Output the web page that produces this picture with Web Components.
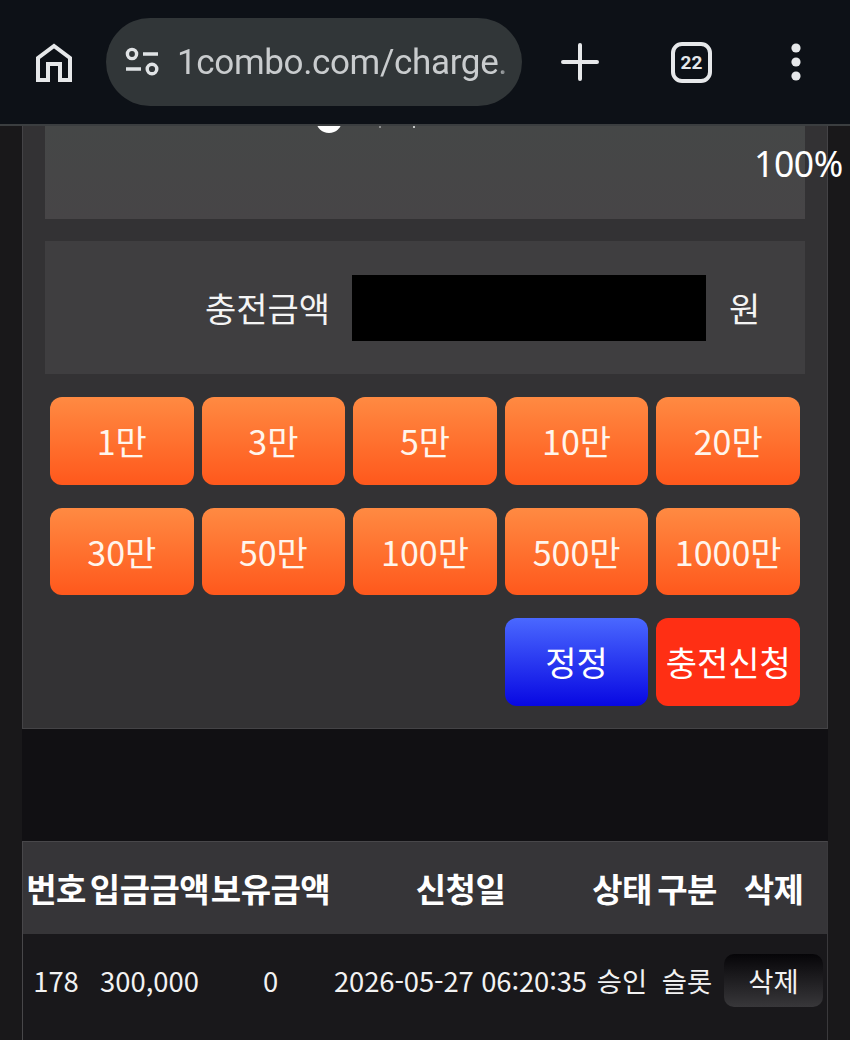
<!DOCTYPE html>
<html lang="ko">
<head>
<meta charset="utf-8">
<title>1combo charge</title>
<style>
    html, body { margin: 0; height: 100%; overflow: hidden; background: #19181a; }
    body { font-family: "Noto Sans CJK KR", "Noto Sans", sans-serif; color: #fff; }
</style>
</head>
<body>
<browser-bar url="1combo.com/charge." tabs="22"></browser-bar>
<page-wrap>
    <charge-panel>
        <progress-box value="100%"></progress-box>
        <amount-row label="충전금액" unit="원"></amount-row>
        <button-grid>
            <money-button>1만</money-button>
            <money-button>3만</money-button>
            <money-button>5만</money-button>
            <money-button>10만</money-button>
            <money-button>20만</money-button>
            <money-button>30만</money-button>
            <money-button>50만</money-button>
            <money-button>100만</money-button>
            <money-button>500만</money-button>
            <money-button>1000만</money-button>
            <money-button kind="blue" style="grid-column: 4">정정</money-button>
            <money-button kind="red" style="grid-column: 5">충전신청</money-button>
        </button-grid>
    </charge-panel>
    <history-table></history-table>
</page-wrap>

<script>
const barTemplate = document.createElement('template');
barTemplate.innerHTML = `
    <style>
        :host {
            display: flex;
            align-items: center;
            height: 124px;
            background: #0d1117;
            border-bottom: 2px solid #3b3e40;
            color: #e6e8ea;
            position: relative;
            z-index: 2;
        }
        svg { display: block; flex: none; }
        .home { margin-left: 34px; margin-top: 1px; }
        .pill {
            display: flex;
            align-items: center;
            box-sizing: border-box;
            width: 416px;
            height: 88px;
            margin-left: 32px;
            padding: 0 0 0 19px;
            border-radius: 44px;
            background: #313638;
        }
        .url {
            margin-left: 16px;
            white-space: nowrap;
            font: 400 35px Roboto, sans-serif;
            letter-spacing: -0.35px;
            color: #c9ccce;
            -webkit-mask-image: linear-gradient(90deg, #000 97%, rgba(0,0,0,0.35) 100%);
        }
        .plus { margin-left: 38px; }
        .tabs {
            display: flex;
            align-items: center;
            justify-content: center;
            box-sizing: border-box;
            width: 41px;
            height: 41px;
            margin-left: 71px;
            border: 4px solid #e6e8ea;
            border-radius: 11px;
            font: 700 19px Roboto, sans-serif;
        }
        .more { margin-left: 78px; }
    </style>
    <svg class="home" width="40" height="42" viewBox="0 0 40 42" fill="none" stroke="#e6e8ea" stroke-width="4">
        <path d="M4 38V16L20 4l16 12v22H26V22H14v16z"/>
    </svg>
    <div class="pill">
        <svg width="36" height="30" viewBox="0 0 36 30" fill="none" stroke="#e0e3e5" stroke-width="3.4">
            <circle cx="7" cy="7" r="4.6"/>
            <path d="M18 7h15M1 22h15"/>
            <circle cx="27" cy="22" r="4.8"/>
        </svg>
        <span class="url"></span>
    </div>
    <svg class="plus" width="40" height="40" viewBox="0 0 40 40" stroke="#e6e8ea" stroke-width="4" stroke-linecap="round">
        <path d="M20 3v34M3 20h34"/>
    </svg>
    <div class="tabs"></div>
    <svg class="more" width="12" height="38" viewBox="0 0 12 38" fill="#e6e8ea">
        <circle cx="6" cy="5" r="4.6"/><circle cx="6" cy="19" r="4.6"/><circle cx="6" cy="33" r="4.6"/>
    </svg>
`;

class BrowserBar extends HTMLElement {
    constructor() {
        super();
        this.attachShadow({mode: 'open'}).appendChild(barTemplate.content.cloneNode(true));
    }

    connectedCallback() {
        this.shadowRoot.querySelector('.url').textContent = this.getAttribute('url');
        this.shadowRoot.querySelector('.tabs').textContent = this.getAttribute('tabs');
    }
}
customElements.define('browser-bar', BrowserBar);

const wrapTemplate = document.createElement('template');
wrapTemplate.innerHTML = `
    <style>
        :host {
            display: block;
            box-sizing: border-box;
            width: 806px;
            margin-left: 22px;
            background: #111013;
        }
    </style>
    <slot></slot>
`;

class PageWrap extends HTMLElement {
    constructor() {
        super();
        this.attachShadow({mode: 'open'}).appendChild(wrapTemplate.content.cloneNode(true));
    }
}
customElements.define('page-wrap', PageWrap);

const panelTemplate = document.createElement('template');
panelTemplate.innerHTML = `
    <style>
        :host {
            display: flex;
            flex-direction: column;
            gap: 22px;
            box-sizing: border-box;
            height: 603px;
            padding: 0 22px;
            margin-bottom: 112px;
            background: #333234;
            border: 1px solid #444346;
            border-top: 0;
        }
    </style>
    <slot></slot>
`;

class ChargePanel extends HTMLElement {
    constructor() {
        super();
        this.attachShadow({mode: 'open'}).appendChild(panelTemplate.content.cloneNode(true));
    }
}
customElements.define('charge-panel', ChargePanel);

const progressTemplate = document.createElement('template');
progressTemplate.innerHTML = `
    <style>
        :host {
            display: block;
            position: relative;
            height: 93px;
            background: linear-gradient(#454747, #474547);
        }
        .knob {
            position: absolute;
            left: 271px;
            top: -19px;
            width: 26px;
            height: 26px;
            border-radius: 50%;
            background: #fff;
            clip-path: inset(19px 0 0 0);
        }
        .tick {
            position: absolute;
            top: 0;
            width: 2px;
            height: 2px;
            background: #8d8f8f;
        }
        .value {
            position: absolute;
            left: 709px;
            top: 15px;
            font: 400 35.5px/44px "Noto Sans", sans-serif;
            letter-spacing: -0.4px;
            white-space: nowrap;
        }
    </style>
    <div class="knob"></div>
    <div class="tick" style="left: 334px"></div>
    <div class="tick" style="left: 368px; background: #c4c6c6"></div>
    <div class="value"></div>
`;

class ProgressBox extends HTMLElement {
    constructor() {
        super();
        this.attachShadow({mode: 'open'}).appendChild(progressTemplate.content.cloneNode(true));
    }

    connectedCallback() {
        this.shadowRoot.querySelector('.value').textContent = this.getAttribute('value');
    }
}
customElements.define('progress-box', ProgressBox);

const rowTemplate = document.createElement('template');
rowTemplate.innerHTML = `
    <style>
        :host {
            display: grid;
            grid-template-columns: 285px 354px auto;
            column-gap: 22px;
            align-items: center;
            height: 133px;
            background: #3f3e40;
            font-size: 34px;
            color: #f4f4f4;
        }
        .label { text-align: right; }
        .input { height: 66px; background: #000; }
        .unit { margin-left: 1px; }
    </style>
    <div class="label"></div>
    <div class="input"></div>
    <div class="unit"></div>
`;

class AmountRow extends HTMLElement {
    constructor() {
        super();
        this.attachShadow({mode: 'open'}).appendChild(rowTemplate.content.cloneNode(true));
    }

    connectedCallback() {
        this.shadowRoot.querySelector('.label').textContent = this.getAttribute('label');
        this.shadowRoot.querySelector('.unit').textContent = this.getAttribute('unit');
    }
}
customElements.define('amount-row', AmountRow);

const gridTemplate = document.createElement('template');
gridTemplate.innerHTML = `
    <style>
        :host {
            display: grid;
            grid-template-columns: repeat(5, 1fr);
            grid-auto-rows: 87.5px;
            gap: 23px 8px;
            margin: 1px 5px 0;
        }
    </style>
    <slot></slot>
`;

class ButtonGrid extends HTMLElement {
    constructor() {
        super();
        this.attachShadow({mode: 'open'}).appendChild(gridTemplate.content.cloneNode(true));
    }
}
customElements.define('button-grid', ButtonGrid);

const buttonTemplate = document.createElement('template');
buttonTemplate.innerHTML = `
    <style>
        :host {
            display: flex;
            align-items: center;
            justify-content: center;
            border-radius: 12px;
            background: linear-gradient(#ff8a42, #ff581c);
            font-size: 34px;
            white-space: nowrap;
            color: #fff5ec;
        }
        :host([kind="blue"]) {
            background: linear-gradient(#4a68ff, #0808e2);
            color: #fff;
        }
        :host([kind="red"]) {
            background: #ff2f14;
            color: #fff;
        }
    </style>
    <slot></slot>
`;

class MoneyButton extends HTMLElement {
    constructor() {
        super();
        this.attachShadow({mode: 'open'}).appendChild(buttonTemplate.content.cloneNode(true));
    }
}
customElements.define('money-button', MoneyButton);

const tableTemplate = document.createElement('template');
tableTemplate.innerHTML = `
    <style>
        :host {
            display: grid;
            grid-template-columns: 66px 121px 121px 259px 64px 66px 107px;
            align-content: start;
            box-sizing: border-box;
            height: 199px;
            background: #19181b;
            border: 1px solid #48474a;
            border-bottom: 0;
            border-right-color: #3a393c;
        }
        .head {
            display: flex;
            align-items: center;
            justify-content: center;
            height: 92px;
            background: #363538;
            font-size: 33px;
            font-weight: 700;
            letter-spacing: -0.5px;
            white-space: nowrap;
        }
        .cell {
            display: flex;
            align-items: center;
            justify-content: center;
            height: 92px;
            font-size: 27.4px;
            white-space: nowrap;
            color: #f2f2f2;
        }
        .date { letter-spacing: -0.1px; }
        .del {
            display: flex;
            align-items: center;
            justify-content: center;
            width: 99px;
            height: 53px;
            border-radius: 10px;
            background: linear-gradient(#060508, #38373a);
        }
    </style>
`;

const columns = ['번호', '입금금액', '보유금액', '신청일', '상태', '구분', '삭제'];
const rows = [
    ['178', '300,000', '0', '2026-05-27 06:20:35', '승인', '슬롯'],
];

class HistoryTable extends HTMLElement {
    constructor() {
        super();
        this.attachShadow({mode: 'open'}).appendChild(tableTemplate.content.cloneNode(true));
    }

    connectedCallback() {
        columns.forEach(name => this.addCell('head', name));
        rows.forEach(row => {
            row.forEach((value, i) => this.addCell(i === 3 ? 'cell date' : 'cell', value));
            const holder = this.addCell('cell', '');
            const del = document.createElement('div');
            del.className = 'del';
            del.textContent = '삭제';
            holder.appendChild(del);
        });
    }

    addCell(className, text) {
        const cell = document.createElement('div');
        cell.className = className;
        cell.textContent = text;
        this.shadowRoot.appendChild(cell);
        return cell;
    }
}
customElements.define('history-table', HistoryTable);
</script>
</body>
</html>
